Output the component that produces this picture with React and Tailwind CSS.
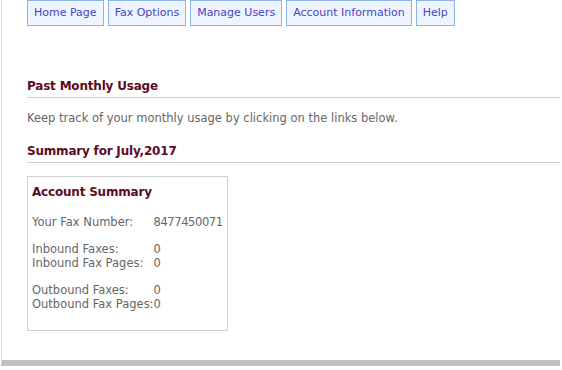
const tabs = ['Home Page', 'Fax Options', 'Manage Users', 'Account Information', 'Help'];

const rows = [
  ['Your Fax Number:', '8477450071'],
  null,
  ['Inbound Faxes:', '0'],
  ['Inbound Fax Pages:', '0'],
  null,
  ['Outbound Faxes:', '0'],
  ['Outbound Fax Pages:', '0'],
];

const App = () => {
  return (
    <div className="w-[562px] h-[370px] bg-white overflow-hidden font-['DejaVu_Sans',Verdana,sans-serif]">
      <div className="flex flex-col w-[559px] h-[366px] border-l border-[#dcdcdc] ml-px border-b-[6px] border-b-[#c0c0c0]">
        <div className="pl-[25px] flex gap-[4px]">
          {tabs.map((t) => (
            <div key={t} className="h-[26px] px-[6px] flex items-center border border-[#8eb4e6] bg-[#eef4ff] text-[11px] text-[#4646c0]">
              {t}
            </div>
          ))}
        </div>

        <div className="pl-[25px] mt-[52px]">
          <h2 className="text-[12px] tracking-[-0.2px] font-bold text-[#5c0b22] leading-[17px] pb-[2px] border-b border-[#cfcfcf]">
            Past Monthly Usage
          </h2>
          <p className="mt-[13px] text-[11.5px] text-[#666] leading-[15px]">
            Keep track of your monthly usage by clicking on the links below.
          </p>
          <h2 className="mt-[17px] text-[12px] tracking-[-0.2px] font-bold text-[#5c0b22] leading-[17px] pb-[2px] border-b border-[#cfcfcf]">
            Summary for July,2017
          </h2>

          <div className="mt-[13px] w-[201px] h-[155px] border border-[#cfcfcf] px-[4px] pt-[7px]">
            <h3 className="text-[12px] tracking-[-0.2px] font-bold text-[#5c0b22] leading-[17px]">Account Summary</h3>
            <div className="mt-[14px] grid grid-cols-[auto_1fr] text-[11.5px] text-[#666] leading-[14px] whitespace-nowrap">
              {rows.map((r, i) =>
                r ? (
                  <div key={i} className="contents">
                    <span>{r[0]}</span>
                    <span className="tracking-[-0.4px]">{r[1]}</span>
                  </div>
                ) : (
                  <div key={i} className="col-span-2 h-[13px]" />
                )
              )}
            </div>
          </div>
        </div>
      </div>
    </div>
  );
};

export default App;
